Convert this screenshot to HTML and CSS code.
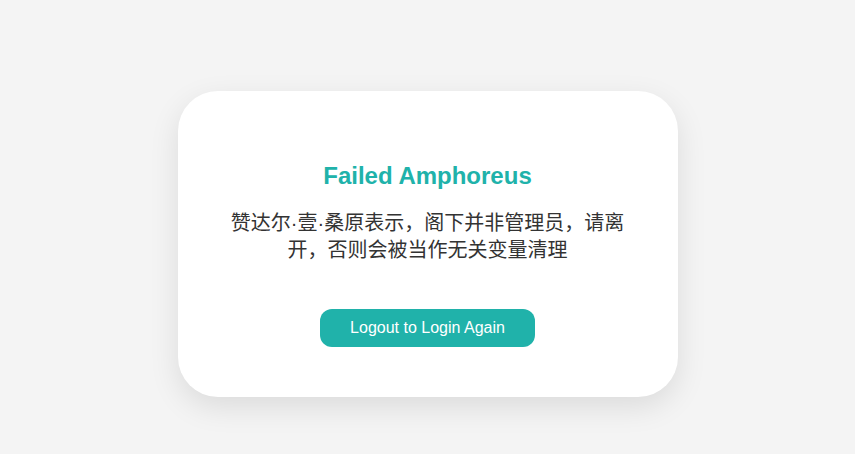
FILE: index.html
```html
<!DOCTYPE html>
<html lang="zh">
<head>
  <meta charset="UTF-8">
  <meta name="viewport" content="width=device-width, initial-scale=1.0">
  <title>Failed Amphoreus</title>
  <link rel="stylesheet" href="styles.css">
</head>
<body>
  <div class="page">
    <div class="card">
      <h2 class="title">Failed Amphoreus</h2>
      <p class="message">赞达尔·壹·桑原表示，阁下并非管理员，请离开，否则会被当作无关变量清理</p>
      <button class="logout-btn">Logout to Login Again</button>
    </div>
  </div>
</body>
</html>
```

FILE: styles.css
```css
/* General */
html, body {
  margin: 0;
  background: #f4f4f4;
}
body {
  font-family: Arial, "Liberation Sans", "Noto Sans CJK SC", sans-serif;
  color: #333;
}
.page {
  display: flex;
  justify-content: center;
  align-items: flex-start;
  box-sizing: border-box;
  min-height: 100vh;
  padding-top: 91px;
}
/* Card */
.card {
  width: 400px;
  padding: 40px 50px 50px;
  background: #fff;
  border-radius: 40px;
  box-shadow: 0 10px 30px rgba(0, 0, 0, 0.1);
  text-align: center;
}
.title {
  margin: 31px 0 20px;
  font-size: 24px;
  line-height: 28px;
  color: #20b2aa;
}
.message {
  margin: 0 0 45px;
  font-size: 20px;
  line-height: 27px;
  color: #333;
}
.logout-btn {
  width: 215px;
  height: 38px;
  border: none;
  border-radius: 12px;
  background: #20b2aa;
  color: #fff;
  font-family: Arial, "Liberation Sans", sans-serif;
  font-size: 16px;
  cursor: pointer;
}
```
